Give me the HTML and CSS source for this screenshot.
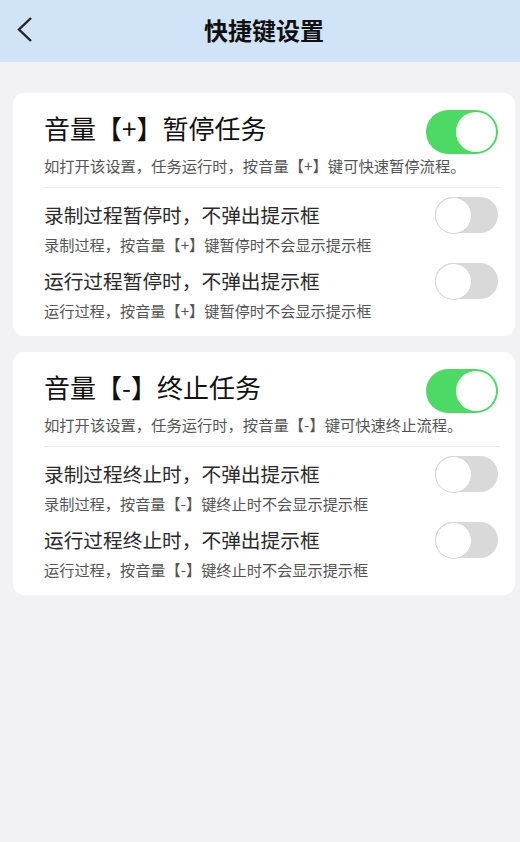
FILE: index.html
```html
<!DOCTYPE html>
<html>
	<head>
		<meta http-equiv="content-type" content="text/html;charset=UTF-8" />
		<link rel="stylesheet" href="styles.css">
	</head>

	<body>
		<div class="header">
			<span class="back">
				<svg width="16" height="28" viewBox="0 0 16 28">
					<polyline points="14,2 2,13.5 14,25" fill="none" stroke="#222" stroke-width="2.4"/>
				</svg>
			</span>
			<span class="headTitle">快捷键设置</span>
			<span></span>
		</div>
		<div class="container">
			<div class="card">
				<div class="cardHead">
					<div class="bigTitle">音量【+】暂停任务</div>
					<span class="switch big on"><i></i></span>
					<div class="desc">如打开该设置，任务运行时，按音量【+】键可快速暂停流程。</div>
				</div>
				<div class="row">
					<div class="rowText">
						<div class="rowTitle">录制过程暂停时，不弹出提示框</div>
						<div class="sub">录制过程，按音量【+】键暂停时不会显示提示框</div>
					</div>
					<span class="switch"><i></i></span>
				</div>
				<div class="row">
					<div class="rowText">
						<div class="rowTitle">运行过程暂停时，不弹出提示框</div>
						<div class="sub">运行过程，按音量【+】键暂停时不会显示提示框</div>
					</div>
					<span class="switch"><i></i></span>
				</div>
			</div>
			<div class="card">
				<div class="cardHead">
					<div class="bigTitle">音量【-】终止任务</div>
					<span class="switch big on"><i></i></span>
					<div class="desc">如打开该设置，任务运行时，按音量【-】键可快速终止流程。</div>
				</div>
				<div class="row">
					<div class="rowText">
						<div class="rowTitle">录制过程终止时，不弹出提示框</div>
						<div class="sub">录制过程，按音量【-】键终止时不会显示提示框</div>
					</div>
					<span class="switch"><i></i></span>
				</div>
				<div class="row">
					<div class="rowText">
						<div class="rowTitle">运行过程终止时，不弹出提示框</div>
						<div class="sub">运行过程，按音量【-】键终止时不会显示提示框</div>
					</div>
					<span class="switch"><i></i></span>
				</div>
			</div>
		</div>
	</body>
</html>
```

FILE: styles.css
```css
html,body{
	margin: 0;
	padding: 0;
}
body{
	background-color: #f2f2f4;
	font-family: "Noto Sans CJK SC", "Noto Sans", sans-serif;
	color: #1a1a1a;
	min-height: 842px;
}
.header{
	height: 62px;
	background-color: #d0e3f7;
	display: grid;
	grid-template-columns: 1fr auto 1fr;
	align-items: center;
}
.back{
	padding-left: 17px;
	display: flex;
	align-items: center;
	margin-top: -2px;
}
.headTitle{
	font-size: 24px;
	font-weight: bold;
	color: #111;
	margin-left: 8px;
	margin-top: -3px;
}
.container{
	padding: 31px 5px 0 13px;
	display: flex;
	flex-direction: column;
	gap: 16px;
}
.card{
	background-color: #fff;
	border-radius: 11px;
	padding: 17px 17px 16px 31px;
}
.cardHead{
	display: grid;
	grid-template-columns: 1fr auto;
	align-items: start;
	padding-bottom: 11px;
	border-bottom: solid 1px #eeeeee;
	margin-right: -2px;
}
.bigTitle{
	font-size: 26px;
	line-height: 34px;
	color: #111;
	padding-top: 1px;
}
.desc{
	grid-column: 1 / 3;
	margin-top: 1px;
	font-size: 15.3px;
	line-height: 21px;
	color: #555;
	white-space: nowrap;
}
.cardHead .switch{
	margin-right: 2px;
}
.row{
	display: flex;
	justify-content: space-between;
	align-items: flex-start;
	padding-top: 9px;
}
.rowText{
	padding-top: 4px;
}
.rowTitle{
	font-size: 19.7px;
	line-height: 28px;
	color: #2a2a2a;
}
.sub{
	margin-top: 5px;
	font-size: 15.2px;
	line-height: 20px;
	color: #555;
}
.switch{
	flex-shrink: 0;
	width: 63px;
	height: 36px;
	border-radius: 18px;
	background-color: #d9d9d9;
	display: flex;
	align-items: center;
	box-sizing: border-box;
}
.switch i{
	width: 37px;
	height: 37px;
	border-radius: 50%;
	background-color: #fff;
	border: solid 1px #d6d6d6;
	box-sizing: border-box;
}
.switch.big{
	width: 72px;
	height: 44px;
	border-radius: 22px;
	padding: 2px;
}
.switch.on{
	background-color: #4cd964;
	justify-content: flex-end;
}
.switch.big i{
	width: 40px;
	height: 40px;
	border: none;
}
```
